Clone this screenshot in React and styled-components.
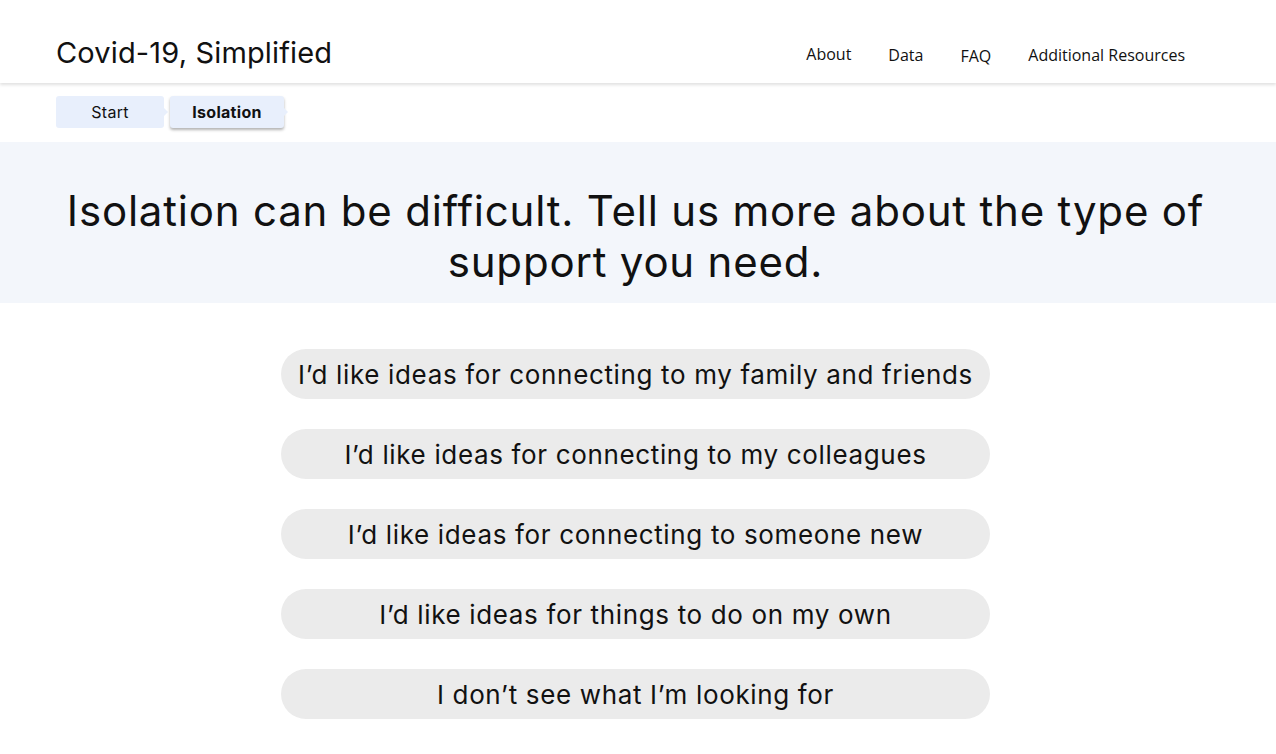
import React from 'react';
import styled, { createGlobalStyle } from 'styled-components';

const GlobalStyle = createGlobalStyle`
    body {
        margin: 0;
        background: #fff;
        font-family: 'Inter', 'Open Sans', sans-serif;
        color: #111;
    }
`;

const Header = styled.header`
    height: 83px;
    display: flex;
    align-items: center;
    justify-content: space-between;
    padding: 0 91px 0 56px;
    background: #fff;
    box-shadow: 0 2px 3px rgba(0, 0, 0, 0.12);
    position: relative;
    z-index: 1;
`;

const Brand = styled.div`
    font-family: 'Inter', sans-serif;
    font-size: 29px;
    letter-spacing: 0.15px;
    color: #111;
    margin-top: 22px;
`;

const Nav = styled.nav`
    display: flex;
    gap: 37px;
    margin-top: 26px;
    font-family: 'Open Sans', sans-serif;
    font-size: 16px;
`;

const NavLink = styled.a`
    color: #111;
    text-decoration: none;
    position: relative;
    top: ${p => p.$shift || 0}px;
`;

const Crumbs = styled.div`
    display: flex;
    gap: 6px;
    padding: 13px 56px 14px;
`;

const Crumb = styled.div`
    position: relative;
    width: ${p => p.$width}px;
    height: 32px;
    display: flex;
    align-items: center;
    justify-content: center;
    background: #e8effc;
    border-radius: 3px;
    font-size: 16px;
    letter-spacing: 0.3px;
    font-weight: ${p => (p.$active ? 700 : 400)};
    color: #111;
    box-shadow: ${p => (p.$active ? '0 2px 3px rgba(0, 0, 0, 0.3)' : 'none')};

    &::after {
        content: '';
        position: absolute;
        right: -4px;
        top: 12px;
        border-top: 4px solid transparent;
        border-bottom: 4px solid transparent;
        border-left: 4px solid #e8effc;
    }
`;

const Hero = styled.section`
    background: #f3f6fb;
    padding: 43px 45px 16px 40px;
    text-align: center;
`;

const HeroText = styled.h1`
    margin: 0;
    font-family: 'Inter', sans-serif;
    font-weight: 400;
    font-size: 42px;
    letter-spacing: 0.8px;
    line-height: 51px;
    color: #111;
`;

const Options = styled.div`
    display: flex;
    flex-direction: column;
    align-items: center;
    gap: 30px;
    padding: 46px 5px 0 0;
`;

const Option = styled.button`
    width: 709px;
    height: 50px;
    border: none;
    border-radius: 25px;
    background: #ebebeb;
    font-family: 'Inter', sans-serif;
    font-size: 26px;
    letter-spacing: 0.65px;
    color: #111;
    cursor: pointer;
`;

const options = [
    'I’d like ideas for connecting to my family and friends',
    'I’d like ideas for connecting to my colleagues',
    'I’d like ideas for connecting to someone new',
    'I’d like ideas for things to do on my own',
    'I don’t see what I’m looking for',
];

const App = () => {
    return (
        <>
            <GlobalStyle />
            <Header>
                <Brand>Covid-19, Simplified</Brand>
                <Nav>
                    <NavLink $shift={-1}>About</NavLink>
                    <NavLink>Data</NavLink>
                    <NavLink $shift={1}>FAQ</NavLink>
                    <NavLink>Additional Resources</NavLink>
                </Nav>
            </Header>
            <Crumbs>
                <Crumb $width={108}>Start</Crumb>
                <Crumb $width={114} $active>Isolation</Crumb>
            </Crumbs>
            <Hero>
                <HeroText>
                    Isolation can be difficult. Tell us more about the type of
                    <br />
                    support you need.
                </HeroText>
            </Hero>
            <Options>
                {options.map(text => (
                    <Option key={text}>{text}</Option>
                ))}
            </Options>
        </>
    );
};

export default App;
